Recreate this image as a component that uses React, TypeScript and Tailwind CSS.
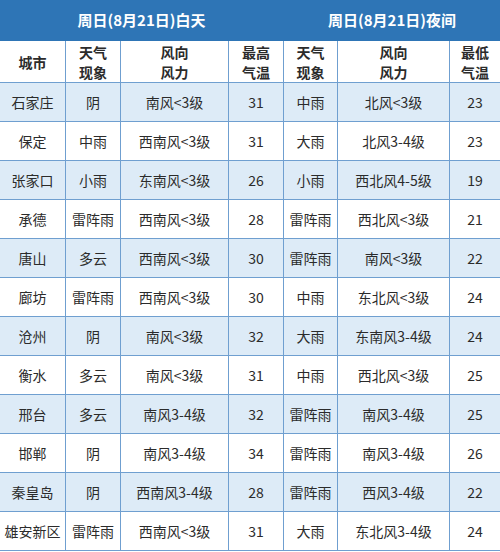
const rows = [
  ['石家庄', '阴', '南风<3级', '31', '中雨', '北风<3级', '23'],
  ['保定', '中雨', '西南风<3级', '31', '大雨', '北风3-4级', '23'],
  ['张家口', '小雨', '东南风<3级', '26', '小雨', '西北风4-5级', '19'],
  ['承德', '雷阵雨', '西南风<3级', '28', '雷阵雨', '西北风<3级', '21'],
  ['唐山', '多云', '西南风<3级', '30', '雷阵雨', '南风<3级', '22'],
  ['廊坊', '雷阵雨', '西南风<3级', '30', '中雨', '东北风<3级', '24'],
  ['沧州', '阴', '南风<3级', '32', '大雨', '东南风3-4级', '24'],
  ['衡水', '多云', '南风<3级', '31', '中雨', '西北风<3级', '25'],
  ['邢台', '多云', '南风3-4级', '32', '雷阵雨', '南风3-4级', '25'],
  ['邯郸', '阴', '南风3-4级', '34', '雷阵雨', '南风3-4级', '26'],
  ['秦皇岛', '阴', '西南风3-4级', '28', '雷阵雨', '西风3-4级', '22'],
  ['雄安新区', '雷阵雨', '西南风<3级', '31', '大雨', '东北风3-4级', '24'],
];

const widths = ['w-[65px]', 'w-[55px]', 'w-[108px]', 'w-[55px]', 'w-[54px]', 'w-[112px]', 'w-[51px]'];

export default function App() {
  return (
    <div className="w-[500px] h-[552px] bg-white overflow-hidden font-['Noto_Sans_CJK_SC','Noto_Sans',sans-serif] text-[14px] text-[#2b2b2b]">
      <table className="w-[501px] table-fixed border-collapse -ml-px">
        <colgroup>
          {widths.map((w, i) => (
            <col key={i} className={i === 0 ? 'w-[66px]' : w} />
          ))}
        </colgroup>
        <thead>
          <tr className="h-[40px] bg-[#2e75b6] text-white font-bold text-[15px]">
            <th colSpan={4} className="border border-[#2e75b6]">周日(8月21日)白天</th>
            <th colSpan={3} className="border border-[#2e75b6]">周日(8月21日)夜间</th>
          </tr>
          <tr className="h-[42px] bg-white font-bold leading-[20px]">
            <th className="border border-[#6f9fd0]">城市</th>
            <th className="border border-[#6f9fd0]">天气<br />现象</th>
            <th className="border border-[#6f9fd0]">风向<br />风力</th>
            <th className="border border-[#6f9fd0]">最高<br />气温</th>
            <th className="border border-[#6f9fd0]">天气<br />现象</th>
            <th className="border border-[#6f9fd0]">风向<br />风力</th>
            <th className="border border-[#6f9fd0]">最低<br />气温</th>
          </tr>
        </thead>
        <tbody>
          {rows.map((r, i) => (
            <tr key={i} className={`h-[39px] ${i % 2 === 0 ? 'bg-[#ddebf7]' : 'bg-white'}`}>
              {r.map((c, j) => (
                <td key={j} className="border border-[#6f9fd0] text-center p-0 whitespace-nowrap">
                  {c}
                </td>
              ))}
            </tr>
          ))}
        </tbody>
      </table>
    </div>
  );
}
